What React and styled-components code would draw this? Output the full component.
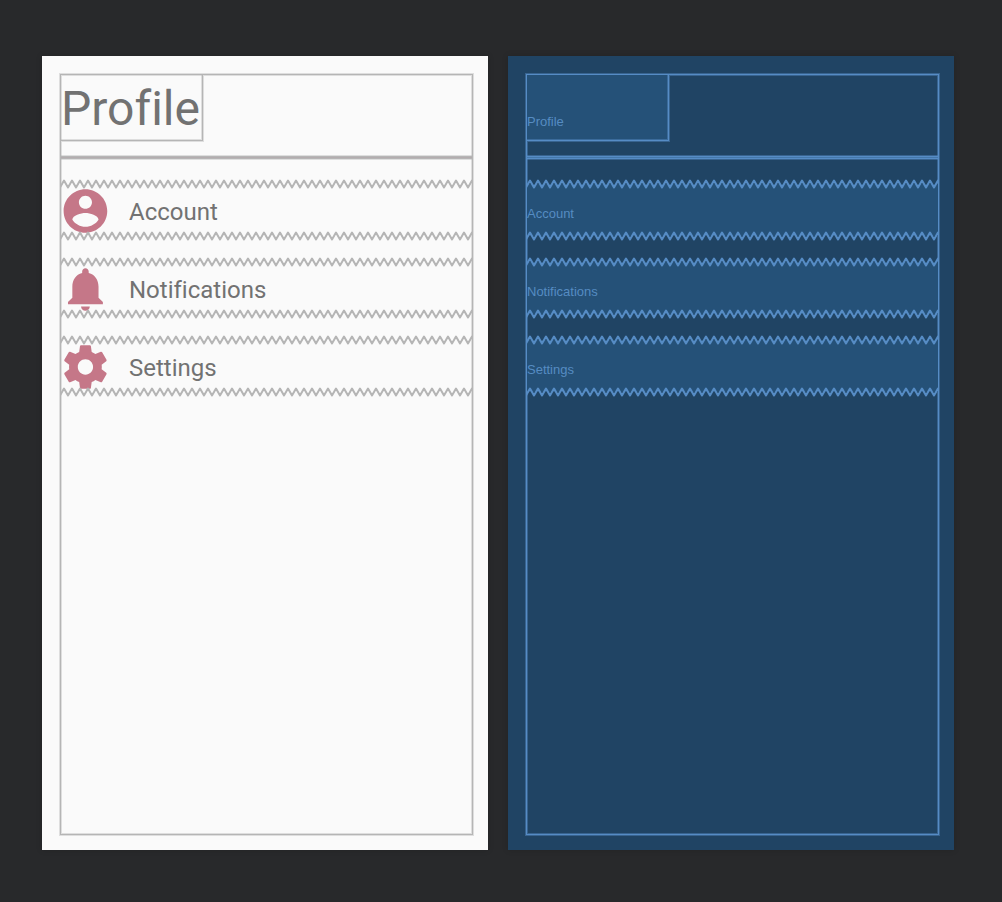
import React, { useId } from "react";
import styled, { createGlobalStyle, ThemeProvider } from "styled-components";

const GlobalStyle = createGlobalStyle`
  * { box-sizing: border-box; }
  body { margin: 0; background: #28292b; font-variant-ligatures: none; }
`;

const designTheme = {
  surface: "#fafafa",
  fill: "transparent",
  line: "#b5b5b5",
  halo: "rgba(181, 181, 181, 0.4)",
  ruleCore: "#b3acae",
  text: "#727272",
  icon: "#c57788",
};

const blueprintTheme = {
  surface: "#204464",
  fill: "#255178",
  line: "#568cc5",
  halo: "rgba(86, 140, 197, 0.45)",
  ruleCore: "#4478ab",
  text: "#568cc2",
  icon: "#568cc2",
};

const Editor = styled.main`
  display: grid;
  grid-template-columns: 1fr 1fr;
  gap: 20px;
  min-height: 100vh;
  padding: 56px 48px 52px 42px;
`;

const Screen = styled.section`
  display: flex;
  padding: 18px 15px 15px 18px;
  background: ${({ theme }) => theme.surface};
  box-shadow: 0 0 6px rgba(0, 0, 0, 0.15);
`;

const Frame = styled.div`
  flex: 1;
  min-width: 0;
  border: 1px solid ${({ theme }) => theme.line};
  box-shadow: 0 0 0 1px ${({ theme }) => theme.halo},
    inset 0 0 0 1px ${({ theme }) => theme.halo};
`;

const Title = styled.h1`
  width: 142px;
  height: 66px;
  margin: 0;
  border: solid ${({ theme }) => theme.line};
  border-width: 0 1px 1px 0;
  box-shadow: 1px 1px 0 ${({ theme }) => theme.halo},
    inset -1px -1px 0 ${({ theme }) => theme.halo};
  background: ${({ theme }) => theme.fill};
  color: ${({ theme }) => theme.text};
  font: 400 48px/68px Roboto, sans-serif;
  font-variant-ligatures: none;
  white-space: nowrap;
`;

const BlueprintTitle = styled(Title)`
  padding-top: 39px;
  font: 400 13px/16px "Liberation Sans", sans-serif;
`;

const Rule = styled.hr`
  height: 5px;
  margin: 14px 0 0;
  border: solid ${({ theme }) => theme.halo};
  border-width: 1px 0;
  background: padding-box linear-gradient(
    ${({ theme: t }) => `${t.line} 1px, ${t.ruleCore} 1px, ${t.ruleCore} 2px, ${t.line} 2px`}
  );
`;

const List = styled.ul`
  display: grid;
  gap: 26px;
  margin: 24px 0 0;
  padding: 0;
  list-style: none;
`;

const Item = styled.li`
  position: relative;
  display: flex;
  align-items: center;
  gap: 20px;
  height: 52px;
  padding-top: 2px;
  background: ${({ theme }) => theme.fill};
  color: ${({ theme }) => theme.text};
`;

const Edge = styled.svg`
  position: absolute;
  left: 0;
  width: 100%;
  height: 10px;
  ${({ $side }) => $side}: -5px;
  color: ${({ theme }) => theme.line};
`;

const Icon = styled.svg`
  flex: none;
  width: 48px;
  height: 48px;
  fill: ${({ theme }) => theme.icon};
`;

const Label = styled.span`
  padding-top: 2px;
  font: 400 24px/32px Roboto, sans-serif;
  font-variant-ligatures: none;
`;

const BlueprintLabel = styled.span`
  padding-top: 6px;
  font: 400 13px/16px "Liberation Sans", sans-serif;
`;

const items = [
  {
    name: "Account",
    path: "M12 2C6.48 2 2 6.48 2 12s4.48 10 10 10 10-4.48 10-10S17.52 2 12 2zm0 3c1.66 0 3 1.34 3 3s-1.34 3-3 3-3-1.34-3-3 1.34-3 3-3zm0 14.2c-2.5 0-4.71-1.28-6-3.22.03-1.99 4-3.08 6-3.08 1.99 0 5.97 1.09 6 3.08-1.29 1.94-3.5 3.22-6 3.22z",
  },
  {
    name: "Notifications",
    path: "M12 22c1.1 0 2-.9 2-2h-4c0 1.1.89 2 2 2zm6-6v-5c0-3.07-1.64-5.64-4.5-6.32V4c0-.83-.67-1.5-1.5-1.5s-1.5.67-1.5 1.5v.68C7.63 5.36 6 7.92 6 11v5l-2 2v1h16v-1l-2-2z",
  },
  {
    name: "Settings",
    path: "M19.43 12.98c.04-.32.07-.64.07-.98s-.03-.66-.07-.98l2.11-1.65c.19-.15.24-.42.12-.64l-2-3.46c-.12-.22-.39-.3-.61-.22l-2.49 1c-.52-.4-1.08-.73-1.69-.98l-.38-2.65C14.46 2.18 14.25 2 14 2h-4c-.25 0-.46.18-.49.42l-.38 2.65c-.61.25-1.17.59-1.69.98l-2.49-1c-.23-.09-.49 0-.61.22l-2 3.46c-.13.22-.07.49.12.64l2.11 1.65c-.04.32-.07.65-.07.98s.03.66.07.98l-2.11 1.65c-.19.15-.24.42-.12.64l2 3.46c.12.22.39.3.61.22l2.49-1c.52.4 1.08.73 1.69.98l.38 2.65c.03.24.24.42.49.42h4c.25 0 .46-.18.49-.42l.38-2.65c.61-.25 1.17-.59 1.69-.98l2.49 1c.23.09.49 0 .61-.22l2-3.46c.12-.22.07-.49-.12-.64l-2.11-1.65zM12 15.5c-1.93 0-3.5-1.57-3.5-3.5s1.57-3.5 3.5-3.5 3.5 1.57 3.5 3.5-1.57 3.5-3.5 3.5z",
  },
];

// Spring-like edge that marks a width constrained to its parent.
function ZigZag({ side }) {
  const id = useId();
  return (
    <Edge $side={side} aria-hidden="true">
      <defs>
        <pattern id={id} width="8" height="10" patternUnits="userSpaceOnUse">
          <path
            d="M-5 1.5 L-1 8.5 L3 1.5 L7 8.5 L11 1.5"
            fill="none"
            stroke="currentColor"
            strokeWidth="2"
            strokeLinejoin="round"
          />
        </pattern>
      </defs>
      <rect width="100%" height="10" fill={`url(#${id})`} />
    </Edge>
  );
}

function DesignView() {
  return (
    <ThemeProvider theme={designTheme}>
      <Screen aria-label="Design">
        <Frame>
          <Title>Profile</Title>
          <Rule />
          <List>
            {items.map(({ name, path }) => (
              <Item key={name}>
                <ZigZag side="top" />
                <Icon viewBox="0.8 1 22 22" aria-hidden="true">
                  <path d={path} />
                </Icon>
                <Label>{name}</Label>
                <ZigZag side="bottom" />
              </Item>
            ))}
          </List>
        </Frame>
      </Screen>
    </ThemeProvider>
  );
}

function BlueprintView() {
  return (
    <ThemeProvider theme={blueprintTheme}>
      <Screen aria-label="Blueprint">
        <Frame>
          <BlueprintTitle as="h2">Profile</BlueprintTitle>
          <Rule />
          <List>
            {items.map(({ name }) => (
              <Item key={name}>
                <ZigZag side="top" />
                <BlueprintLabel>{name}</BlueprintLabel>
                <ZigZag side="bottom" />
              </Item>
            ))}
          </List>
        </Frame>
      </Screen>
    </ThemeProvider>
  );
}

export default function App() {
  return (
    <>
      <GlobalStyle />
      <Editor>
        <DesignView />
        <BlueprintView />
      </Editor>
    </>
  );
}
